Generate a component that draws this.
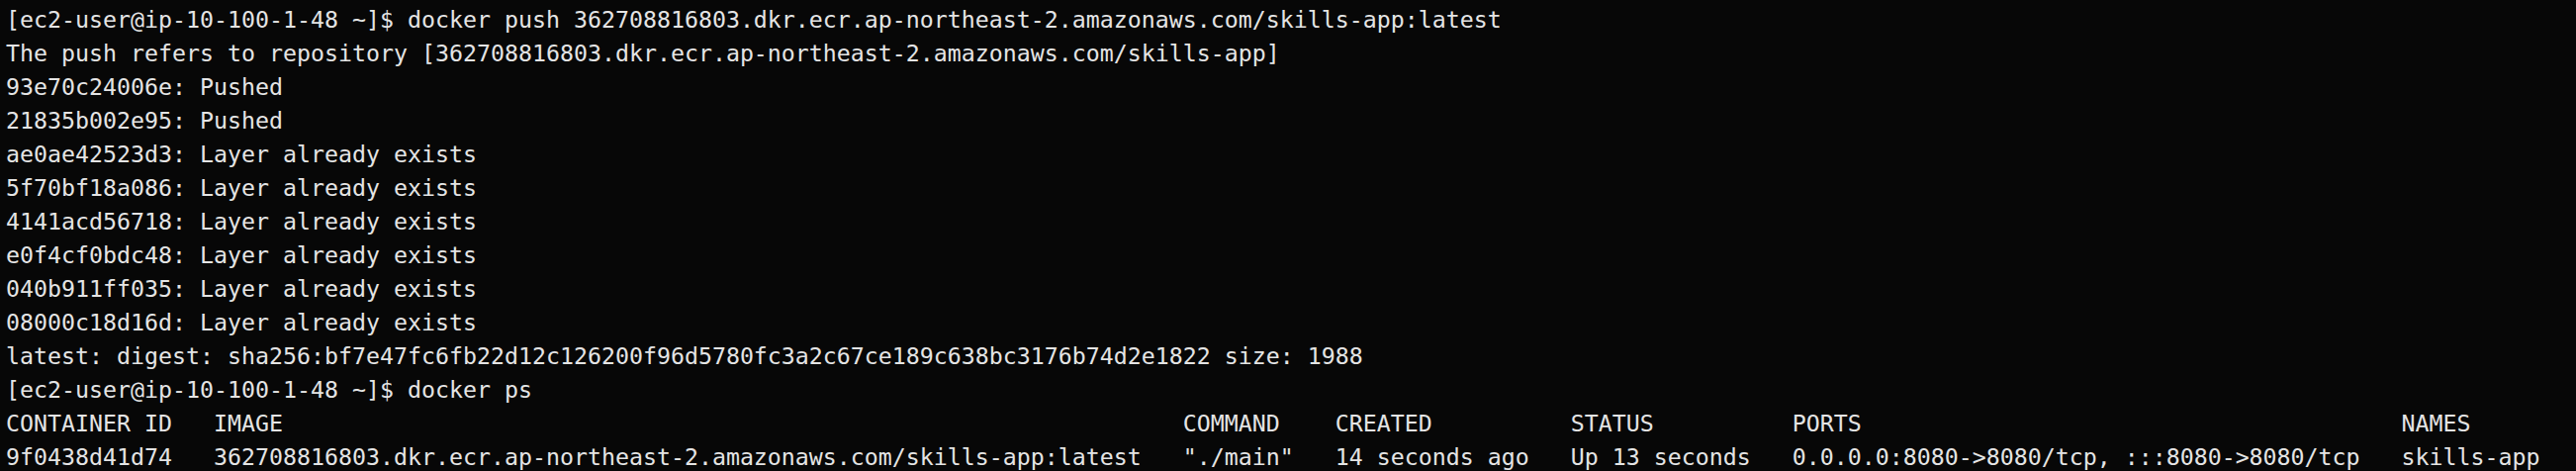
import React from 'react';

// docker ps columns: widths taken from the longest value + 3 spaces
const widths = [15, 70, 11, 17, 16, 44];

const row = (cells: string[]) =>
  cells.map((c, i) => (i < widths.length ? c.padEnd(widths[i], ' ') : c)).join('');

const lines: string[] = [
  '[ec2-user@ip-10-100-1-48 ~]$ docker push 362708816803.dkr.ecr.ap-northeast-2.amazonaws.com/skills-app:latest',
  'The push refers to repository [362708816803.dkr.ecr.ap-northeast-2.amazonaws.com/skills-app]',
  '93e70c24006e: Pushed',
  '21835b002e95: Pushed',
  'ae0ae42523d3: Layer already exists',
  '5f70bf18a086: Layer already exists',
  '4141acd56718: Layer already exists',
  'e0f4cf0bdc48: Layer already exists',
  '040b911ff035: Layer already exists',
  '08000c18d16d: Layer already exists',
  'latest: digest: sha256:bf7e47fc6fb22d12c126200f96d5780fc3a2c67ce189c638bc3176b74d2e1822 size: 1988',
  '[ec2-user@ip-10-100-1-48 ~]$ docker ps',
  row(['CONTAINER ID', 'IMAGE', 'COMMAND', 'CREATED', 'STATUS', 'PORTS', 'NAMES']),
  row([
    '9f0438d41d74',
    '362708816803.dkr.ecr.ap-northeast-2.amazonaws.com/skills-app:latest',
    '"./main"',
    '14 seconds ago',
    'Up 13 seconds',
    '0.0.0.0:8080->8080/tcp, :::8080->8080/tcp',
    'skills-app',
  ]),
];

export default function App() {
  return (
    <div className="w-full h-[476px] overflow-hidden bg-[#070707] text-[#e4e4e4] pl-[6px] pt-[3px] font-['DejaVu_Sans_Mono',monospace] text-[23.25px] leading-[34px]">
      {lines.map((line, i) => (
        <div key={i} className="whitespace-pre">
          {line}
        </div>
      ))}
    </div>
  );
}
